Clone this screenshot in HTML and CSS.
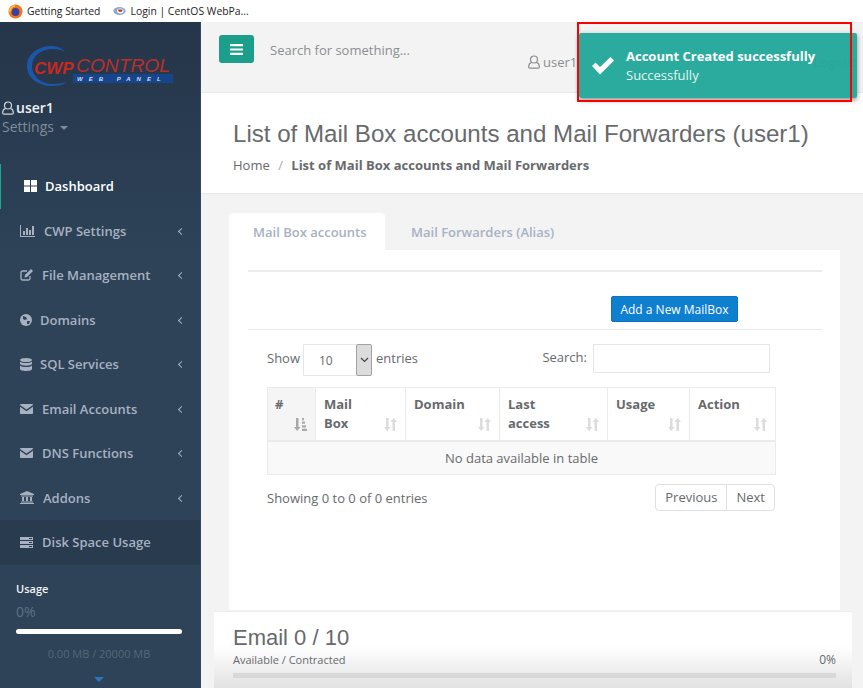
FILE: index.html
```html
<!DOCTYPE html>
<html lang="en">
<head>
    <meta charset="UTF-8">
    <title>List of Mail Box accounts and Mail Forwarders</title>
    <link rel="stylesheet" href="styles.css">
</head>
<body>
    <div class="bookmarks">
        <span class="bookmark">
            <svg width="15" height="15" viewBox="0 0 16 16"><circle cx="8" cy="8" r="7.5" fill="#f5761f"/><circle cx="8" cy="8.5" r="4.2" fill="#3b3f9e"/><path d="M1 9C1 4 4 1 8 .5c-1 1-1 2-.5 2.5C5 3 3.5 4.5 3.5 7.5z" fill="#fbc02d"/></svg>
            Getting Started
        </span>
        <span class="bookmark">
            <svg width="13" height="10" viewBox="0 0 16 12"><ellipse cx="8" cy="6" rx="7.5" ry="5" fill="#8fa8c8"/><ellipse cx="9" cy="6" rx="4" ry="3" fill="#fff"/><path d="M6 4h6l-1 3H7z" fill="#c0392b"/></svg>
            Login | CentOS WebPa...
        </span>
    </div>

    <div class="shell">
        <aside class="sidebar">
            <div class="logo">
                <svg width="160" height="46" viewBox="0 0 160 46">
                    <path d="M30 3C16 3 5 11 5 23s11 20 25 20c6 0 11-1 15-4-4 1-9 2-14 2C19 41 10 33 10 23S19 6 31 6c5 0 9 1 12 3-3-4-8-6-13-6z" fill="#1b56a8"/>
                    <rect x="51" y="31" width="100" height="9" fill="#17458c"/>
                    <text x="12" y="31" class="logo-cwp">CWP</text>
                    <text x="54" y="28.8" class="logo-control" textLength="94" lengthAdjust="spacingAndGlyphs">CONTROL</text>
                    <text x="55" y="38" class="logo-web">WEB PANEL</text>
                </svg>
            </div>
            <div class="user-box">
                <div class="user-name">
                    <svg class="user-icon" width="12" height="14" viewBox="0 0 12 14" fill="none" stroke="#cfd6df" stroke-width="1.2"><circle cx="6" cy="4.5" r="3.5"/><path d="M3.5 7.5C1.5 8 .7 9.5.7 11.5v.5c0 .7.5 1.2 1.2 1.2h8.2c.7 0 1.2-.5 1.2-1.2v-.5c0-2-.8-3.500-2.800-4"/></svg>
                    user1
                </div>
                <div class="user-settings">Settings <span class="caret"></span></div>
            </div>

            <ul class="nav">
                <li class="nav-item active">
                    <svg class="nav-icon" width="13" height="12" viewBox="0 0 13 12" fill="currentColor"><rect width="6" height="5.5"/><rect x="7" width="6" height="5.5"/><rect y="6.5" width="6" height="5.5"/><rect x="7" y="6.5" width="6" height="5.5"/></svg>
                    <span class="nav-label">Dashboard</span>
                </li>
                <li class="nav-item">
                    <svg class="nav-icon" width="15" height="12" viewBox="0 0 15 12" fill="currentColor"><path d="M0 0h1v11h14v1H0z"/><rect x="3" y="6" width="2" height="4"/><rect x="6" y="3" width="2" height="7"/><rect x="9" y="5" width="2" height="5"/><rect x="12" y="1" width="2" height="9"/></svg>
                    <span class="nav-label">CWP Settings</span>
                    <span class="chevron"></span>
                </li>
                <li class="nav-item">
                    <svg class="nav-icon" width="13" height="12" viewBox="0 0 13 12"><path d="M10 7v2.500c0 1-.6 1.500-1.500 1.500h-6C1.600 11 1 10.400 1 9.500v-6C1 2.600 1.600 2 2.500 2H7" fill="none" stroke="currentColor" stroke-width="1.3"/><path d="M11 0l2 2-6 6-2.500.5L5 6z" fill="currentColor"/></svg>
                    <span class="nav-label">File Management</span>
                    <span class="chevron"></span>
                </li>
                <li class="nav-item">
                    <svg class="nav-icon tiny" width="12" height="12" viewBox="0 0 12 12"><circle cx="6" cy="6" r="6" fill="currentColor"/><path d="M3 2l3 1 1 2-2 1-2-1zM7 7l3 0-1 3-2 0z" fill="#2e4257"/></svg>
                    <span class="nav-label">Domains</span>
                    <span class="chevron"></span>
                </li>
                <li class="nav-item">
                    <svg class="nav-icon tiny" width="12" height="13" viewBox="0 0 12 13" fill="currentColor"><ellipse cx="6" cy="2" rx="6" ry="2"/><path d="M0 3.500C1 4.800 3.500 5 6 5s5-.2 6-1.500V6c-1 1.300-3.500 1.700-6 1.700S1 7.300 0 6zM0 7.500C1 8.800 3.500 9 6 9s5-.2 6-1.500V11c0 1.200-3 2-6 2s-6-.8-6-2z"/></svg>
                    <span class="nav-label">SQL Services</span>
                    <span class="chevron"></span>
                </li>
                <li class="nav-item">
                    <svg class="nav-icon" width="13" height="10" viewBox="0 0 13 10" fill="currentColor"><path d="M0 1c0-.6.5-1 1-1h11c.6 0 1 .4 1 1L6.500 5.500zM0 2.700l6.500 4.500L13 2.700V9c0 .6-.4 1-1 1H1c-.6 0-1-.4-1-1z"/></svg>
                    <span class="nav-label">Email Accounts</span>
                    <span class="chevron"></span>
                </li>
                <li class="nav-item">
                    <svg class="nav-icon" width="13" height="10" viewBox="0 0 13 10" fill="currentColor"><path d="M0 1c0-.6.5-1 1-1h11c.6 0 1 .4 1 1L6.500 5.500zM0 2.700l6.500 4.500L13 2.700V9c0 .6-.4 1-1 1H1c-.6 0-1-.4-1-1z"/></svg>
                    <span class="nav-label">DNS Functions</span>
                    <span class="chevron"></span>
                </li>
                <li class="nav-item">
                    <svg class="nav-icon" width="14" height="13" viewBox="0 0 14 13" fill="currentColor"><path d="M7 0l7 3v1H0V3z"/><path d="M1 4.500h12v1H1zM2 6h2v4H2zM6 6h2v4H6zM10 6h2v4h-2zM1 10.500h12v1H1zM0 12h14v1H0z"/></svg>
                    <span class="nav-label">Addons</span>
                    <span class="chevron"></span>
                </li>
                <li class="nav-item dark">
                    <svg class="nav-icon" width="13" height="11" viewBox="0 0 13 11" fill="currentColor"><path d="M0 0h13v3H0zM0 4h13v3H0zM0 8h13v3H0z"/><path d="M9 1h3v1H9zM9 5h3v1H9zM9 9h3v1H9z" fill="#26384b"/></svg>
                    <span class="nav-label">Disk Space Usage</span>
                </li>
            </ul>

            <div class="usage">
                <div class="usage-title">Usage</div>
                <div class="usage-pct">0%</div>
                <div class="usage-bar"></div>
                <div class="usage-note">0.00 MB / 20000 MB</div>
                <div class="usage-more"></div>
            </div>
        </aside>

        <main class="main">
            <div class="topbar">
                <button class="menu-btn">
                    <svg width="13" height="11" viewBox="0 0 13 11" fill="#fff"><rect width="13" height="2.2" rx=".5"/><rect y="4.4" width="13" height="2.2" rx=".5"/><rect y="8.8" width="13" height="2.2" rx=".5"/></svg>
                </button>
                <span class="search-hint">Search for something...</span>
                <span class="top-user">
                    <svg width="12" height="14" viewBox="0 0 12 14" fill="none" stroke="#8a8d90" stroke-width="1.2"><circle cx="6" cy="4.5" r="3.5"/><path d="M3.5 7.5C1.5 8 .7 9.5.7 11.5v.5c0 .7.5 1.2 1.2 1.2h8.2c.7 0 1.2-.5 1.2-1.2v-.5c0-2-.8-3.500-2.800-4"/></svg>
                    user1
                </span>
                <span class="top-logout">Logout</span>
            </div>

            <div class="page-head">
                <h1>List of Mail Box accounts and Mail Forwarders (user1)</h1>
                <div class="crumbs">
                    <span>Home</span>
                    <span class="crumb-sep">/</span>
                    <strong>List of Mail Box accounts and Mail Forwarders</strong>
                </div>
            </div>

            <div class="content">
                <div class="tabs">
                    <span class="tab active">Mail Box accounts</span>
                    <span class="tab">Mail Forwarders (Alias)</span>
                </div>
                <div class="panel">
                    <div class="add-row">
                        <button class="add-btn">Add a New MailBox</button>
                    </div>
                    <div class="dt">
                        <div class="dt-top">
                            <label class="dt-length">
                                Show
                                <span class="fake-select">
                                    <span class="fake-value">10</span>
                                    <span class="fake-arrow"><svg width="9" height="6" viewBox="0 0 9 6" fill="none" stroke="#444" stroke-width="1.2"><path d="M1 1l3.500 3.500L8 1"/></svg></span>
                                </span>
                                entries
                            </label>
                            <label class="dt-search">Search: <span class="search-box"></span></label>
                        </div>
                        <table class="dt-table">
                            <thead>
                                <tr>
                                    <th class="col-id sorted">#<svg class="sort" width="13" height="13" viewBox="0 0 13 13" fill="#a9a9a9"><path d="M2 0h2.500v9h2L3.200 13 0 9h2zM8 0h2v2.200H8zM8 3.600h3v2.200H8zM8 7.200h4v2.200H8zM8 10.800h5V13H8z"/></svg></th>
                                    <th class="col-mail">Mail<br>Box<svg class="sort" width="13" height="13" viewBox="0 0 13 13" fill="#dcdcdc"><path d="M2 0h2.500v9h2L3.200 13 0 9h2zM8.500 13h2.500V4h2L9.800 0 6.500 4h2z"/></svg></th>
                                    <th class="col-domain">Domain<svg class="sort" width="13" height="13" viewBox="0 0 13 13" fill="#dcdcdc"><path d="M2 0h2.500v9h2L3.200 13 0 9h2zM8.500 13h2.500V4h2L9.800 0 6.500 4h2z"/></svg></th>
                                    <th class="col-last">Last<br>access<svg class="sort" width="13" height="13" viewBox="0 0 13 13" fill="#dcdcdc"><path d="M2 0h2.500v9h2L3.200 13 0 9h2zM8.500 13h2.500V4h2L9.800 0 6.500 4h2z"/></svg></th>
                                    <th class="col-usage">Usage<svg class="sort" width="13" height="13" viewBox="0 0 13 13" fill="#dcdcdc"><path d="M2 0h2.500v9h2L3.200 13 0 9h2zM8.500 13h2.500V4h2L9.800 0 6.500 4h2z"/></svg></th>
                                    <th class="col-action">Action<svg class="sort" width="13" height="13" viewBox="0 0 13 13" fill="#dcdcdc"><path d="M2 0h2.500v9h2L3.200 13 0 9h2zM8.500 13h2.500V4h2L9.800 0 6.500 4h2z"/></svg></th>
                                </tr>
                            </thead>
                            <tbody>
                                <tr><td colspan="6">No data available in table</td></tr>
                            </tbody>
                        </table>
                        <div class="dt-bottom">
                            <span>Showing 0 to 0 of 0 entries</span>
                            <span class="pager">
                                <span class="page-btn">Previous</span>
                                <span class="page-btn">Next</span>
                            </span>
                        </div>
                    </div>
                </div>
            </div>

            <div class="quota">
                <div class="quota-title">Email 0 / 10</div>
                <div class="quota-line"><span>Available / Contracted</span><span>0%</span></div>
                <div class="quota-track"></div>
            </div>

            <div class="toast">
                <svg width="24" height="19" viewBox="0 0 24 19" fill="#fff"><path d="M1 10l3.500-3.500L9 11 19.500 1 23 4.500 9 18.500z"/></svg>
                <div>
                    <div class="toast-title">Account Created successfully</div>
                    <div class="toast-text">Successfully</div>
                </div>
            </div>
            <div class="red-box"></div>
        </main>
    </div>
</body>
</html>
```

FILE: styles.css
```css
* {
    box-sizing: border-box;
}
html, body {
    margin: 0;
    height: 688px;
    overflow: hidden;
}
body {
    font-family: "Open Sans", Arial, sans-serif;
    font-size: 13px;
    color: #676a6c;
    background-color: #f3f3f4;
}

/* browser bookmarks strip */
.bookmarks {
    height: 22px;
    background-color: #fff;
    display: flex;
    align-items: center;
    gap: 13px;
    padding-left: 8px;
    font-size: 10.4px;
    color: #222;
}
.bookmark {
    display: flex;
    align-items: center;
    gap: 4px;
}

.shell {
    display: flex;
    height: 666px;
}

/* sidebar */
.sidebar {
    width: 201px;
    flex-shrink: 0;
    background: linear-gradient(#25354a, #2e4358 35%, #2e4358);
    border-right: 1px solid #33485c;
    color: #a7b1c2;
    position: relative;
}
.logo {
    height: 68px;
    padding: 21px 0 0 22px;
}
.logo svg {
    display: block;
}
.logo-cwp {
    font-family: "Liberation Sans", sans-serif;
    font-size: 17px;
    font-weight: bold;
    font-style: italic;
    fill: #c8281e;
}
.logo-control {
    font-family: "Liberation Sans", sans-serif;
    font-size: 19px;
    font-style: italic;
    fill: #b8302a;
}
.logo-web {
    font-family: "Liberation Sans", sans-serif;
    font-size: 6px;
    font-weight: bold;
    font-style: italic;
    letter-spacing: 6px;
    fill: #d5dceb;
}
.user-box {
    height: 74px;
    padding: 8px 0 0 2px;
}
.user-name {
    display: flex;
    align-items: center;
    gap: 2px;
    color: #eef1f4;
    font-size: 14px;
    font-weight: 600;
    line-height: 20px;
}
.user-settings {
    font-size: 14px;
    line-height: 18px;
    color: #7e8c9c;
}
.caret {
    display: inline-block;
    margin-left: 2px;
    vertical-align: 2px;
    border-top: 4px solid #7e8c9c;
    border-left: 4px solid transparent;
    border-right: 4px solid transparent;
}
.nav {
    list-style: none;
    margin: 0;
    padding: 0;
}
.nav-item {
    height: 44.5px;
    display: flex;
    align-items: center;
    padding-left: 20px;
    font-size: 13px;
    font-weight: 600;
    color: #a7b1c2;
    position: relative;
}
.nav-item.active {
    color: #fff;
    border-left: 1px solid #19aa8d;
    padding-left: 23px;
}
.nav-item.active .nav-icon {
    margin-right: 8px;
}
.nav-item.dark {
    background-color: #293b4e;
}
.nav-icon {
    margin-right: 9px;
    flex-shrink: 0;
}
.nav-icon.tiny {
    margin-right: 8px;
}
.chevron {
    position: absolute;
    left: 179px;
    top: 20px;
    width: 5px;
    height: 5px;
    border-left: 1.3px solid #a7b1c2;
    border-bottom: 1.3px solid #a7b1c2;
    transform: rotate(45deg);
}
.usage {
    padding: 15px 18px 0 16px;
}
.usage-title {
    color: #f2f4f6;
    font-size: 11px;
    font-weight: 600;
    line-height: 18px;
}
.usage-pct {
    margin-top: 4px;
    font-size: 14px;
    line-height: 20px;
    color: #5f7084;
}
.usage-bar {
    margin-top: 7px;
    height: 5px;
    border-radius: 3px;
    background-color: #fff;
}
.usage-note {
    margin-top: 12px;
    font-size: 11px;
    line-height: 16px;
    text-align: center;
    color: #566779;
}
.usage-more {
    width: 0;
    margin: 15px auto 0;
    border-top: 5px solid #2a74c0;
    border-left: 5px solid transparent;
    border-right: 5px solid transparent;
}

/* main column */
.main {
    flex: 1;
    min-width: 0;
    display: flex;
    flex-direction: column;
    position: relative;
    overflow: hidden;
}
.topbar {
    height: 71px;
    flex-shrink: 0;
    display: flex;
    align-items: flex-start;
    padding: 13px 0 0 18px;
    border-bottom: 1px solid #e7eaec;
    position: relative;
}
.menu-btn {
    width: 35px;
    height: 28px;
    padding: 0;
    border: none;
    border-radius: 3px;
    background-color: #1b9e8a;
    display: flex;
    align-items: center;
    justify-content: center;
}
.search-hint {
    margin-left: 16px;
    margin-top: 5px;
    line-height: 20px;
    color: #8b8e90;
}
.top-user {
    position: absolute;
    left: 327px;
    top: 31px;
    display: flex;
    align-items: center;
    gap: 3px;
    color: #8b8e90;
}
.top-logout {
    position: absolute;
    left: 612px;
    top: 31px;
    font-weight: 600;
    color: #8b8e90;
}
.page-head {
    height: 101px;
    flex-shrink: 0;
    background-color: #fff;
    border-bottom: 1px solid #e7eaec;
    padding: 26px 0 0 32px;
}
.page-head h1 {
    margin: 0;
    font-family: "Liberation Sans", Arial, sans-serif;
    font-size: 24.1px;
    font-weight: 400;
    line-height: 29px;
    color: #676a6c;
}
.crumbs {
    margin-top: 8px;
    line-height: 18px;
}
.crumb-sep {
    margin: 0 5px;
    color: #aaa;
}
.crumbs strong {
    font-weight: 700;
}

/* tabs and panel */
.content {
    flex: 1;
    min-height: 0;
    padding: 19px 23px 0 28px;
    display: flex;
    flex-direction: column;
}
.tabs {
    display: flex;
    height: 37px;
    flex-shrink: 0;
}
.tab {
    padding: 0 0 0 26px;
    line-height: 38px;
    font-weight: 600;
    color: #a7b1c2;
    white-space: nowrap;
}
.tab.active {
    background-color: #fff;
    border-radius: 4px 4px 0 0;
    width: 156px;
    padding-left: 24px;
}
.panel {
    flex: 1;
    background-color: #fff;
    padding: 20px 18px 0 19px;
    min-height: 0;
}
.add-row {
    height: 60px;
    border-top: 2px solid #ececec;
    border-bottom: 1px solid #e7eaec;
    padding: 24px 0 0 363px;
}
.add-btn {
    width: 127px;
    height: 26px;
    padding: 0;
    border: 1px solid #0f74bd;
    border-radius: 2px;
    background-color: #0f7fd0;
    color: #fff;
    font-family: inherit;
    font-size: 12px;
}
.dt {
    width: 508px;
    margin-left: 19px;
}
.dt-top {
    display: flex;
    justify-content: space-between;
    padding-top: 14px;
    height: 57px;
}
.dt-length {
    display: flex;
    align-items: flex-start;
    gap: 3px;
    line-height: 28px;
}
.fake-select {
    display: flex;
    width: 69px;
    height: 32px;
    border: 1px solid #e5e6e7;
    border-radius: 1px;
    margin-right: 1px;
}
.fake-value {
    flex: 1;
    padding-left: 15px;
    font-size: 12px;
    line-height: 31px;
}
.fake-arrow {
    width: 16px;
    margin: -1px -1px -1px 0;
    background-color: #dcdcdc;
    border: 1px solid #a3a3a3;
    border-radius: 2px;
    display: flex;
    align-items: center;
    justify-content: center;
}
.dt-search {
    display: flex;
    align-items: flex-start;
    gap: 6px;
    line-height: 26px;
    margin-right: 5px;
}
.search-box {
    width: 177px;
    height: 29px;
    border: 1px solid #e5e6e7;
}
.dt-table {
    width: 508px;
    table-layout: fixed;
    border-collapse: collapse;
}
.dt-table th {
    position: relative;
    height: 53px;
    padding: 7px 8px 0 8px;
    vertical-align: top;
    text-align: left;
    font-weight: 700;
    line-height: 19px;
    border: 1px solid #ebebeb;
    border-bottom-width: 2px;
    color: #676a6c;
}
.dt-table th.sorted {
    background-color: #f5f5f6;
    padding-left: 7px;
}
.col-id { width: 48px; }
.col-mail { width: 90px; }
.col-domain { width: 94px; }
.col-last { width: 108px; }
.col-usage { width: 82px; }
.col-action { width: 86px; }
.sort {
    position: absolute;
    right: 8px;
    top: 30px;
}
.dt-table td {
    height: 34px;
    text-align: center;
    background-color: #f9f9f9;
    border: 1px solid #ebebeb;
    padding: 0;
}
.dt-bottom {
    display: flex;
    justify-content: space-between;
    align-items: center;
    margin-top: 9px;
}
.pager {
    display: flex;
    border: 1px solid #e0e0e0;
    border-radius: 4px;
    height: 27px;
}
.page-btn {
    line-height: 25px;
    padding: 0 9px;
}
.page-btn + .page-btn {
    border-left: 1px solid #e0e0e0;
}

/* quota card at the bottom */
.quota {
    height: 77px;
    flex-shrink: 0;
    margin: 1px 11px 0 13px;
    padding: 13px 16px 0 19px;
    background: linear-gradient(#fff, #fff 45%, #e2e2e2);
    border-top: 1px solid #eee;
}
.quota-title {
    font-family: "Liberation Sans", Arial, sans-serif;
    font-size: 22px;
    line-height: 25px;
    color: #676a6c;
}
.quota-line {
    display: flex;
    justify-content: space-between;
    font-size: 11px;
    line-height: 16px;
    margin-top: 2px;
}
.quota-line span + span {
    font-size: 12px;
}
.quota-track {
    height: 5px;
    margin-top: 5px;
    background-color: #d8d8d8;
}

/* toast and the red marker drawn over it */
.toast {
    position: absolute;
    left: 378px;
    top: 11px;
    width: 278px;
    height: 65px;
    display: flex;
    align-items: center;
    gap: 11px;
    padding: 0 0 0 12px;
    background-color: rgba(36, 168, 154, .97);
    border-radius: 2px;
    box-shadow: 0 2px 5px rgba(0, 0, 0, .45);
    color: #fff;
}
.toast-title {
    font-weight: 700;
    line-height: 19px;
}
.toast-text {
    line-height: 19px;
    color: #e4f5f2;
}
.red-box {
    position: absolute;
    left: 376px;
    top: 0;
    width: 275px;
    height: 80px;
    border: 2px solid #f00;
}
```
